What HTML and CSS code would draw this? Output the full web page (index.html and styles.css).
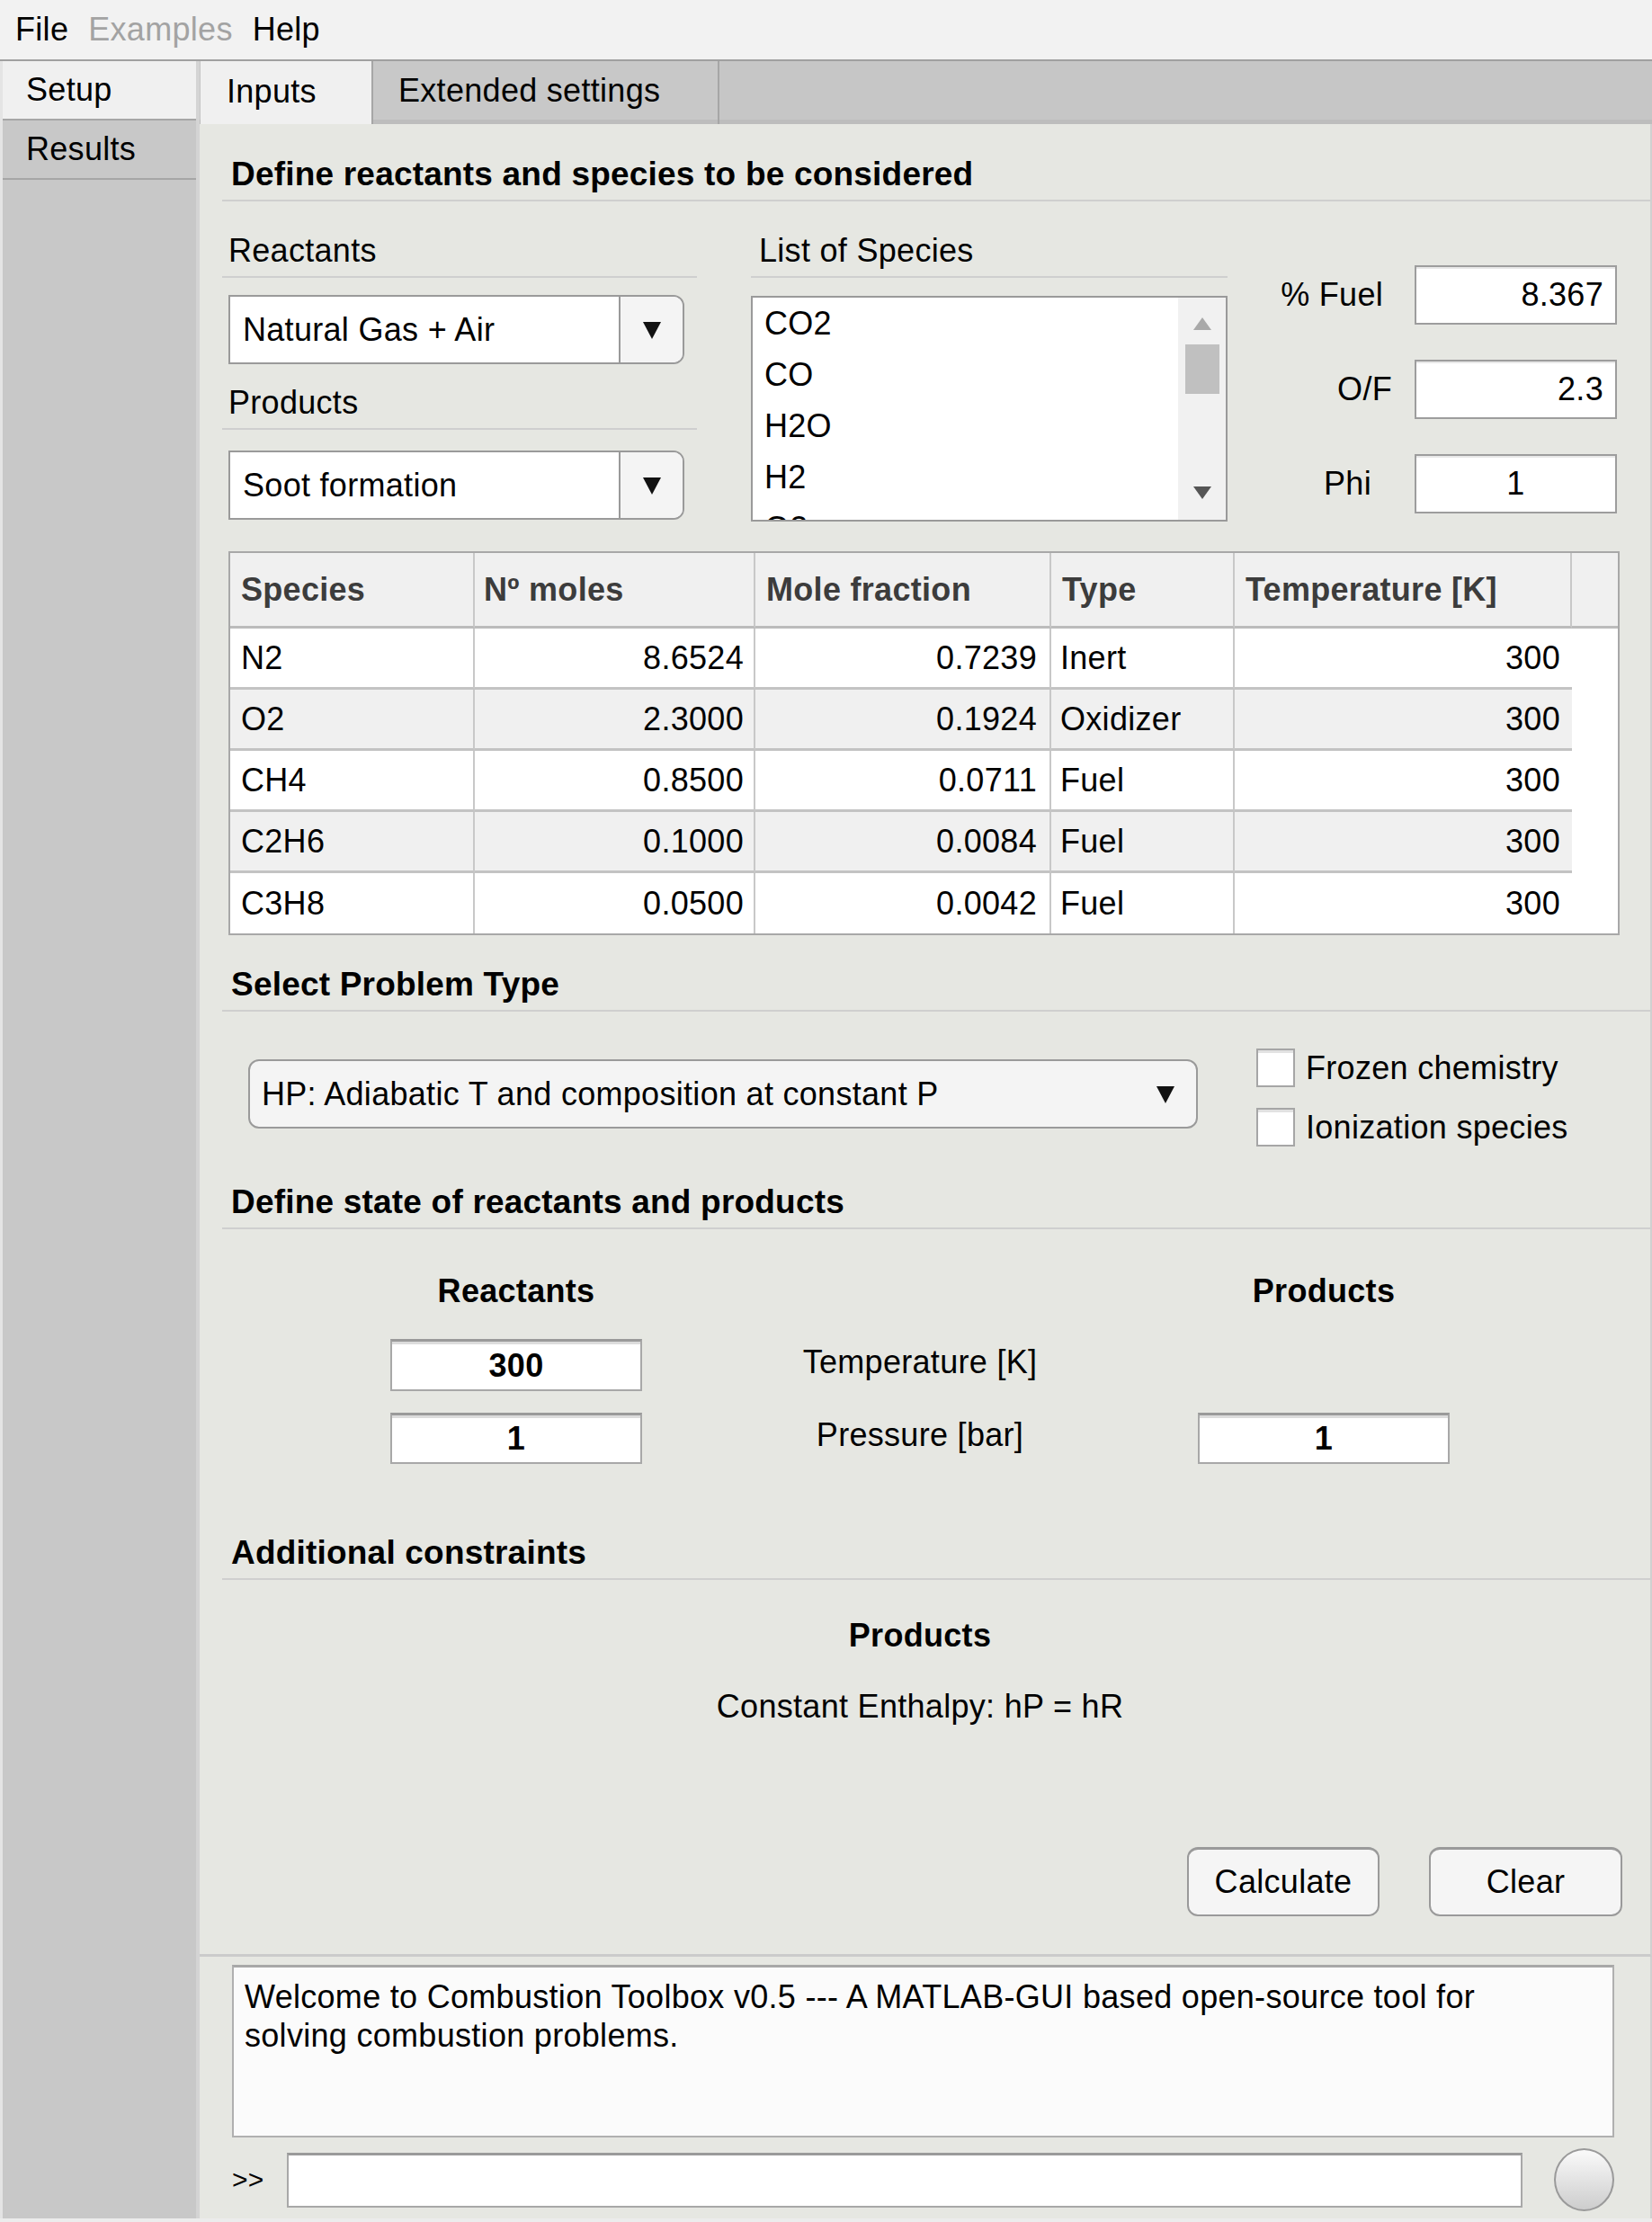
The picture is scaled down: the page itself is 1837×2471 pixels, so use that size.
FILE: index.html
```html
<!DOCTYPE html>
<html lang="en">
<head>
<meta charset="utf-8">
<title>Combustion Toolbox</title>
<link rel="stylesheet" href="styles.css">
</head>
<body>
<div class="app">
  <div class="menubar">
    <span class="menu">File</span>
    <span class="menu menu-disabled">Examples</span>
    <span class="menu">Help</span>
  </div>
  <div class="workspace">
    <aside class="sidebar">
      <div class="side-tab side-tab-active">Setup</div>
      <div class="side-tab">Results</div>
    </aside>
    <main class="main">
      <div class="tabstrip">
        <div class="tab tab-active">Inputs</div>
        <div class="tab tab-inactive">Extended settings</div>
      </div>
      <div class="panel">
        <div class="section-head section-head-first">Define reactants and species to be considered</div>
        <div class="top-row">
          <div class="col-mix">
            <div class="sub-label">Reactants</div>
            <div class="select select-reactants">
              <div class="select-text">Natural Gas + Air</div>
              <div class="select-btn"><svg width="22" height="22" viewBox="0 0 22 22"><polygon points="1,2 21,2 11,21" fill="#111"/></svg></div>
            </div>
            <div class="sub-label sub-label-products">Products</div>
            <div class="select select-products">
              <div class="select-text">Soot formation</div>
              <div class="select-btn"><svg width="22" height="22" viewBox="0 0 22 22"><polygon points="1,2 21,2 11,21" fill="#111"/></svg></div>
            </div>
          </div>
          <div class="col-species">
            <div class="sub-label sub-label-species">List of Species</div>
            <div class="listbox">
              <div class="list-items">
                <div class="list-item">CO2</div>
                <div class="list-item">CO</div>
                <div class="list-item">H2O</div>
                <div class="list-item">H2</div>
                <div class="list-item">O2</div>
              </div>
              <div class="scrollbar">
                <svg class="sb-up" width="20" height="14" viewBox="0 0 20 14"><polygon points="10,0 20,14 0,14" fill="#a9a9a9"/></svg>
                <div class="thumb"></div>
                <svg class="sb-down" width="20" height="14" viewBox="0 0 20 14"><polygon points="0,0 20,0 10,14" fill="#555"/></svg>
              </div>
            </div>
          </div>
          <div class="ratios">
            <div class="ratio-label ratio-label-fuel">% Fuel</div>
            <div class="ratio-input">8.367</div>
            <div class="ratio-label ratio-label-of">O/F</div>
            <div class="ratio-input">2.3</div>
            <div class="ratio-label ratio-label-phi">Phi</div>
            <div class="ratio-input ratio-input-center">1</div>
          </div>
        </div>

        <table class="species-table">
          <colgroup>
            <col class="c-species"><col class="c-moles"><col class="c-frac"><col class="c-type"><col class="c-temp"><col class="c-fill">
          </colgroup>
          <thead>
            <tr><th>Species</th><th>Nº moles</th><th>Mole fraction</th><th>Type</th><th>Temperature [K]</th><th class="filler"></th></tr>
          </thead>
          <tbody>
            <tr><td>N2</td><td class="num">8.6524</td><td class="num frac">0.7239</td><td>Inert</td><td class="num temp">300</td><td class="filler"></td></tr>
            <tr class="alt"><td>O2</td><td class="num">2.3000</td><td class="num frac">0.1924</td><td>Oxidizer</td><td class="num temp">300</td><td class="filler"></td></tr>
            <tr><td>CH4</td><td class="num">0.8500</td><td class="num frac">0.0711</td><td>Fuel</td><td class="num temp">300</td><td class="filler"></td></tr>
            <tr class="alt"><td>C2H6</td><td class="num">0.1000</td><td class="num frac">0.0084</td><td>Fuel</td><td class="num temp">300</td><td class="filler"></td></tr>
            <tr><td>C3H8</td><td class="num">0.0500</td><td class="num frac">0.0042</td><td>Fuel</td><td class="num temp">300</td><td class="filler"></td></tr>
          </tbody>
        </table>

        <div class="section-head section-head-problem">Select Problem Type</div>
        <div class="problem-row">
          <div class="select-wide">
            <span>HP: Adiabatic T and composition at constant P</span>
            <svg width="22" height="22" viewBox="0 0 22 22"><polygon points="1,2 21,2 11,21" fill="#111"/></svg>
          </div>
          <div class="checks">
            <div class="check"><span class="check-box"></span><span>Frozen chemistry</span></div>
            <div class="check"><span class="check-box"></span><span>Ionization species</span></div>
          </div>
        </div>

        <div class="section-head section-head-state">Define state of reactants and products</div>
        <div class="state-grid">
          <div class="col-title col-a">Reactants</div>
          <div class="col-title col-c">Products</div>
          <div class="state-input col-a row-2">300</div>
          <div class="state-label col-b row-2">Temperature [K]</div>
          <div class="state-input state-input-short col-a row-3">1</div>
          <div class="state-label state-label-short col-b row-3">Pressure [bar]</div>
          <div class="state-input state-input-short col-c row-3">1</div>
        </div>

        <div class="section-head section-head-constraints">Additional constraints</div>
        <div class="constraints">
          <div class="constraints-title">Products</div>
          <div class="constraints-text">Constant Enthalpy: hP = hR</div>
        </div>

        <div class="actions">
          <button class="btn">Calculate</button>
          <button class="btn btn-clear">Clear</button>
        </div>
      </div>

      <div class="console">
        <div class="console-out">Welcome to Combustion Toolbox v0.5 --- A MATLAB-GUI based open-source tool for solving combustion problems.</div>
        <div class="cmd-row">
          <span class="prompt">&gt;&gt;</span>
          <div class="cmd-input"></div>
          <div class="cmd-btn"></div>
        </div>
      </div>
    </main>
  </div>
</div>
</body>
</html>
```

FILE: styles.css
```css
* { box-sizing: border-box; }

html, body { margin: 0; padding: 0; }

body {
  width: 1837px;
  height: 2471px;
  overflow: hidden;
  background: #ececec;
  font-family: "Liberation Sans", Arial, Helvetica, sans-serif;
  font-size: 36px;
  letter-spacing: 0.3px;
  color: #000;
}

.app {
  display: flex;
  flex-direction: column;
  height: 2467px;
}

/* Menu bar */
.menubar {
  flex: none;
  height: 68px;
  display: flex;
  align-items: center;
  gap: 22px;
  padding-left: 17px;
  background: #f2f2f2;
  border-bottom: 2px solid #a0a0a0;
}
.menu-disabled { color: #a3a3a3; }

.workspace {
  flex: 1;
  display: flex;
  min-height: 0;
}

/* Sidebar */
.sidebar {
  flex: none;
  width: 222px;
  background: #c8c8c8;
  border-left: 3px solid #e4e4e4;
  border-right: 4px solid #d4d4d4;
}
.side-tab {
  height: 66px;
  display: flex;
  align-items: center;
  padding-left: 26px;
  border-bottom: 2px solid #a6a6a6;
}
.side-tab-active { background: #f0f0f0; }

/* Main */
.main {
  flex: 1;
  display: flex;
  flex-direction: column;
  min-width: 0;
}

.tabstrip {
  flex: none;
  height: 70px;
  display: flex;
  background: #c6c6c6;
  box-shadow: inset 0 -5px 0 #bdbdbd;
}
.tab {
  height: 70px;
  display: flex;
  align-items: center;
}
.tab-active {
  width: 190px;
  margin-left: 1px;
  padding: 0 0 3px 29px;
  background: #f0f0f0;
}
.tab-inactive {
  width: 387px;
  padding: 0 0 5px 28px;
  background: #c8c8c8;
  border-left: 2px solid #a6a6a6;
  border-right: 2px solid #a6a6a6;
  box-shadow: inset 0 -5px 0 #bdbdbd;
}

.panel {
  flex: none;
  height: 2038px;
  display: flex;
  flex-direction: column;
  padding-left: 25px;
  background: #e6e7e2;
  border-right: 2px solid #d0d0d0;
  border-bottom: 3px solid #cbcbcb;
}

.section-head {
  flex: none;
  height: 58px;
  display: flex;
  align-items: center;
  padding-left: 10px;
  border-bottom: 2px solid #cfcfcf;
  font-size: 37px;
  font-weight: bold;
  letter-spacing: 0.2px;
}
.section-head-first { margin-top: 28px; }
.section-head-problem { margin-top: 27px; }
.section-head-state { margin-top: 34px; }
.section-head-constraints { margin-top: 71px; }

/* Top row */
.top-row {
  flex: none;
  display: flex;
  align-items: flex-start;
}
.col-mix {
  width: 528px;
  padding-top: 27px;
}
.col-species {
  width: 530px;
  margin-left: 60px;
  padding-top: 27px;
}
.sub-label {
  height: 58px;
  display: flex;
  align-items: center;
  padding-left: 7px;
  border-bottom: 2px solid #cfcfcf;
}
.sub-label-products { margin-top: 15px; }
.sub-label-species { padding-left: 9px; }

.select {
  display: flex;
  width: 507px;
  height: 77px;
  margin-left: 7px;
  background: #fff;
  border: 2px solid #9a9a9a;
  border-radius: 0 12px 12px 0;
}
.select-reactants { margin-top: 19px; }
.select-products { margin-top: 23px; }
.select-text {
  flex: 1;
  display: flex;
  align-items: center;
  padding-left: 14px;
}
.select-btn {
  width: 71px;
  display: flex;
  align-items: center;
  justify-content: center;
  background: #f4f4f4;
  border-left: 2px solid #9a9a9a;
  border-radius: 0 10px 10px 0;
}

.listbox {
  display: flex;
  width: 530px;
  height: 251px;
  margin-top: 20px;
  overflow: hidden;
  background: #fff;
  border: 2px solid #9a9a9a;
}
.list-items {
  flex: 1;
  padding-left: 13px;
}
.list-item {
  height: 57px;
  display: flex;
  align-items: center;
}
.scrollbar {
  width: 53px;
  display: flex;
  flex-direction: column;
  align-items: center;
  padding: 22px 0 23px;
  background: #f1f1f1;
}
.thumb {
  width: 38px;
  height: 55px;
  margin-top: 16px;
  background: #c0c0c0;
}
.sb-down { margin-top: auto; }

.ratios {
  display: grid;
  grid-template-columns: 150px 225px;
  grid-template-rows: 66px 66px 66px;
  column-gap: 18px;
  row-gap: 39px;
  margin: 71px 0 0 40px;
}
.ratio-label {
  display: flex;
  align-items: center;
  justify-content: flex-end;
}
.ratio-label-fuel { padding-right: 17px; }
.ratio-label-of { padding-right: 7px; }
.ratio-label-phi { padding-right: 30px; }
.ratio-input {
  display: flex;
  align-items: center;
  justify-content: flex-end;
  padding-right: 13px;
  background: #fff;
  border: 2px solid #9d9d9d;
  box-shadow: inset 0 2px 0 #e8e8e8;
}
.ratio-input-center {
  justify-content: center;
  padding-right: 0;
}

/* Table */
.species-table {
  flex: none;
  width: 1547px;
  margin: 33px 0 0 7px;
  table-layout: fixed;
  border-collapse: separate;
  border-spacing: 0;
  background: #fff;
  border: 2px solid #a8a8a8;
}
.c-species { width: 272px; }
.c-moles { width: 312px; }
.c-frac { width: 329px; }
.c-type { width: 204px; }
.c-temp { width: 375px; }
.c-fill { width: 51px; }

.species-table th,
.species-table td {
  padding: 0 11px 0 12px;
  white-space: nowrap;
  overflow: hidden;
  border-right: 2px solid #c8c8c8;
  border-bottom: 3px solid #c3c3c3;
}
.species-table th {
  height: 84px;
  text-align: left;
  font-weight: bold;
  color: #3c3c3c;
  background: #f0f0f0;
  border-bottom-color: #bcbcbc;
}
.species-table th:nth-child(2) { padding-left: 10px; }
.species-table td { height: 68px; }
.species-table td:nth-child(4) { padding-left: 10px; }
.species-table tr.alt td { background: #f0f0f0; }
.species-table tbody tr:last-child td {
  height: 67px;
  border-bottom: none;
}
.species-table .num { text-align: right; }
.species-table .frac { padding-right: 14px; }
.species-table td.temp {
  border-right: none;
  padding-right: 13px;
}
.species-table th.filler { border-right: none; }
.species-table td.filler,
.species-table tr.alt td.filler {
  background: #fff;
  border-right: none;
  border-bottom: none;
}

/* Problem type */
.problem-row {
  flex: none;
  display: flex;
  align-items: flex-start;
  padding-left: 29px;
}
.select-wide {
  width: 1056px;
  height: 77px;
  margin-top: 53px;
  display: flex;
  align-items: center;
  justify-content: space-between;
  padding: 0 23px 0 13px;
  background: #f4f4f4;
  border: 2px solid #9a9a9a;
  border-radius: 12px;
}
.checks {
  display: flex;
  flex-direction: column;
  gap: 23px;
  margin: 41px 0 0 65px;
}
.check {
  height: 43px;
  display: flex;
  align-items: center;
  gap: 12px;
}
.check-box {
  width: 43px;
  height: 43px;
  background: #fff;
  border: 2px solid #a6a6a6;
  box-shadow: inset 0 3px 0 #e2e2e2;
}

/* State */
.state-grid {
  flex: none;
  display: grid;
  grid-template-columns: 280px 618px 280px;
  grid-template-rows: 74px 82px 57px;
  margin: 48px 0 0 187px;
}
.col-a { grid-column: 1; }
.col-b { grid-column: 2; }
.col-c { grid-column: 3; }
.row-2 { grid-row: 2; }
.row-3 { grid-row: 3; }
.col-title {
  grid-row: 1;
  align-self: start;
  height: 42px;
  line-height: 42px;
  text-align: center;
  font-weight: bold;
}
.state-input {
  align-self: start;
  height: 58px;
  display: flex;
  align-items: center;
  justify-content: center;
  font-weight: bold;
  background: #fff;
  border: 2px solid #a8a8a8;
  border-top: 3px solid #9a9a9a;
  box-shadow: inset 0 3px 0 #dcdcdc;
}
.state-input-short { height: 57px; }
.state-label {
  align-self: start;
  height: 52px;
  display: flex;
  align-items: center;
  justify-content: center;
}
.state-label-short { height: 50px; }

/* Constraints */
.constraints {
  flex: none;
  text-align: center;
  padding-right: 36px;
}
.constraints-title {
  margin-top: 41px;
  line-height: 42px;
  font-weight: bold;
}
.constraints-text {
  margin-top: 37px;
  line-height: 42px;
}

.actions {
  flex: none;
  display: flex;
  justify-content: flex-end;
  gap: 55px;
  margin-top: 135px;
  padding-right: 31px;
}
.btn {
  width: 214px;
  height: 77px;
  padding: 0;
  font: inherit;
  letter-spacing: inherit;
  color: #000;
  background: #f5f5f5;
  border: 2px solid #9a9a9a;
  border-top-width: 3px;
  border-radius: 12px;
}
.btn-clear { width: 215px; }

/* Console */
.console {
  flex: 1;
  padding: 9px 0 0 36px;
  background: #e6e7e2;
  border-right: 2px solid #d0d0d0;
}
.console-out {
  width: 1537px;
  height: 192px;
  padding: 11px 60px 0 12px;
  line-height: 43px;
  background: #fbfbfb;
  border: 2px solid #b0b0b0;
  border-top: 3px solid #a8a8a8;
}
.cmd-row {
  display: flex;
  align-items: center;
  margin-top: 12px;
}
.prompt {
  width: 61px;
  font-size: 30px;
}
.cmd-input {
  width: 1374px;
  height: 61px;
  background: #fff;
  border: 2px solid #a8a8a8;
  border-top: 3px solid #9a9a9a;
}
.cmd-btn {
  width: 67px;
  height: 70px;
  margin-left: 35px;
  border-radius: 50%;
  border: 2px solid #9a9a9a;
  background: linear-gradient(#fafafa, #cdcdcd);
}
```
